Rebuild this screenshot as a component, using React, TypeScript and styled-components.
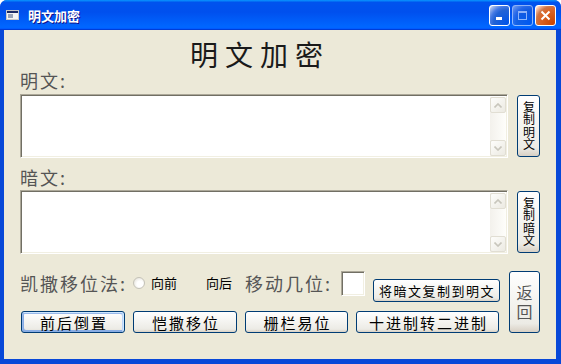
import React from "react";
import styled, { createGlobalStyle, css } from "styled-components";

const CJK = `"Noto Sans CJK SC", "Noto Sans", sans-serif`;

const Global = createGlobalStyle`
  html, body { margin: 0; padding: 0; background: #ffffff; }
  body { font-family: ${CJK}; }
`;

const Window = styled.div`
  width: 561px;
  height: 364px;
  box-sizing: border-box;
  display: flex;
  flex-direction: column;
  background: #0848d8;
  border-radius: 7px 7px 0 0;
  overflow: hidden;
`;

const TitleBar = styled.div`
  height: 30px;
  flex: none;
  display: flex;
  align-items: center;
  padding: 0 5px 0 6px;
  background: linear-gradient(180deg, #0997ff, #0053ee 8%, #0050ee 40%, #06f 88%, #06f 93%, #005bff 95%, #003dd7 96%, #003dd7);
`;

const TitleText = styled.span`
  margin-left: 9px;
  font-family: ${CJK};
  font-weight: bold;
  font-size: 13px;
  color: #ffffff;
  text-shadow: 1px 1px #0f1089;
  flex: 1;
`;

const Controls = styled.div`
  display: flex;
  gap: 2px;
`;

const CtrlButton = styled.div<{ $close?: boolean; $disabled?: boolean }>`
  width: 21px;
  height: 21px;
  box-sizing: border-box;
  border: 1px solid #ffffff;
  border-radius: 3px;
  display: flex;
  align-items: center;
  justify-content: center;
  background: radial-gradient(circle at 90% 90%, #0054e9 0%, #2263d5 55%, #4479e4 70%, #a3bbec 90%, #fff 100%);
  ${(p) =>
    p.$close &&
    css`
      background: radial-gradient(circle at 90% 90%, #cc4600 0%, #dc6527 55%, #cd7546 70%, #ffccb2 90%, #fff 100%);
    `}
  ${(p) =>
    p.$disabled &&
    css`
      opacity: 0.55;
    `}
`;

const Client = styled.div`
  flex: 1;
  margin: 0 5px 5px 4px;
  background: #ece9d8;
  padding: 9px 0 0 16px;
  display: flex;
  flex-direction: column;
`;

const Heading = styled.div`
  margin-left: 170px;
  height: 30px;
  line-height: 30px;
  font-size: 28px;
  letter-spacing: 7px;
  color: #1a1a1a;
  font-family: ${CJK};
`;

const Label = styled.div<{ $mt?: number }>`
  height: 24px;
  line-height: 22px;
  font-size: 18px;
  letter-spacing: 2px;
  color: #555;
  margin-top: ${(p) => p.$mt ?? 0}px;
`;

const FieldRow = styled.div<{ $mt?: number }>`
  display: flex;
  align-items: flex-start;
  margin-top: ${(p) => p.$mt ?? 0}px;
`;

const Field = styled.div`
  width: 488px;
  height: 64px;
  box-sizing: border-box;
  background: #ffffff;
  border: 1px solid;
  border-color: #aca899 #ffffff #ffffff #aca899;
  box-shadow: inset 1px 1px #716f64, inset -1px -1px #f1efe2;
  padding: 2px 1px 1px 2px;
  display: flex;
  justify-content: flex-end;
`;

const ScrollBar = styled.div`
  width: 16px;
  height: 100%;
  display: flex;
  flex-direction: column;
  justify-content: space-between;
  background: linear-gradient(90deg, #f3f1ec, #fefefb);
`;

const ScrollBtn = styled.div`
  width: 16px;
  height: 16px;
  box-sizing: border-box;
  border: 1px solid #e1ded3;
  border-radius: 2px;
  background: linear-gradient(135deg, #fdfdfb, #eceae2);
  display: flex;
  align-items: center;
  justify-content: center;
`;

const XPButton = styled.button<{ $default?: boolean }>`
  box-sizing: border-box;
  margin: 0;
  padding: 0;
  border: 1px solid #003c74;
  border-radius: 3px;
  background: linear-gradient(180deg, #fff, #ecebe5 86%, #d8d0c4);
  font-family: ${CJK};
  color: #000;
  display: flex;
  align-items: center;
  justify-content: center;
  ${(p) =>
    p.$default &&
    css`
      box-shadow: inset -1px 1px #cee7ff, inset 1px 2px #98b8ea, inset -2px 2px #bcd4f6, inset 1px -1px #89ade4, inset 2px -2px #89ade4;
    `}
`;

const SideButton = styled(XPButton)`
  width: 23px;
  height: 62px;
  margin: 1px 0 0 9px;
  font-size: 12px;
  line-height: 12px;
  letter-spacing: 0.5px;
  writing-mode: vertical-rl;
`;

const BottomArea = styled.div`
  display: flex;
  margin-top: 16px;
`;

const LeftCol = styled.div`
  width: 480px;
  display: flex;
  flex-direction: column;
`;

const CaesarRow = styled.div`
  height: 26px;
  display: flex;
  align-items: center;
`;

const RowText = styled.span<{ $w: number; $small?: boolean }>`
  width: ${(p) => p.$w}px;
  flex: none;
  line-height: 26px;
  ${(p) =>
    p.$small
      ? css`
          font-size: 13px;
          color: #000;
        `
      : css`
          font-size: 18px;
          letter-spacing: 2px;
          color: #555;
        `}
`;

const Radio = styled.span`
  width: 12px;
  height: 12px;
  margin-right: 6px;
  box-sizing: border-box;
  border-radius: 50%;
  border: 1px solid #c4c2b8;
  background: radial-gradient(circle at 60% 60%, #ffffff 35%, #e4e2da 85%);
  flex: none;
`;

const SmallInput = styled.div`
  width: 24px;
  height: 25px;
  box-sizing: border-box;
  background: #ffffff;
  border: 1px solid;
  border-color: #aca899 #ffffff #ffffff #aca899;
  box-shadow: inset 1px 1px #716f64, inset -1px -1px #f1efe2;
  flex: none;
`;

const CopyBackButton = styled(XPButton)`
  width: 127px;
  height: 23px;
  margin: 9px 0 0 8px;
  align-self: flex-start;
  font-size: 13px;
  letter-spacing: 1.5px;
  padding-left: 1px;
`;

const ButtonRow = styled.div`
  display: flex;
  margin-top: 15px;
  padding-left: 1px;
  gap: 8px;
`;

const RowButton = styled(XPButton)<{ $w: number }>`
  width: ${(p) => p.$w}px;
  height: 22px;
  font-size: 15px;
  letter-spacing: 2px;
  padding-left: 2px;
`;

const ReturnButton = styled(XPButton)`
  width: 31px;
  height: 62px;
  margin: 1px 0 0 9px;
  font-size: 16px;
  letter-spacing: 3px;
  color: #555;
  writing-mode: vertical-rl;
  padding-top: 3px;
`;

const Arrow = ({ up }: { up?: boolean }) => (
  <svg width="8" height="5" viewBox="0 0 8 5">
    <path
      d={up ? "M0.5 4.5 L4 1 L7.5 4.5" : "M0.5 0.5 L4 4 L7.5 0.5"}
      fill="none"
      stroke="#c8c6bc"
      strokeWidth="1.6"
    />
  </svg>
);

const Scroll = () => (
  <ScrollBar>
    <ScrollBtn>
      <Arrow up />
    </ScrollBtn>
    <ScrollBtn>
      <Arrow />
    </ScrollBtn>
  </ScrollBar>
);

export default function App() {
  return (
    <>
      <Global />
      <Window>
        <TitleBar>
          <svg width="13" height="10" viewBox="0 0 13 10">
            <rect x="0.5" y="0.5" width="12" height="9" fill="#f4f4f4" stroke="#c8c8c8" />
            <rect x="1" y="1" width="11" height="2" fill="#1c2a64" />
            <rect x="2" y="4" width="5" height="4" fill="#9aa4b8" />
          </svg>
          <TitleText>明文加密</TitleText>
          <Controls>
            <CtrlButton>
              <svg width="13" height="13" viewBox="0 0 13 13">
                <rect x="3" y="8" width="6" height="3" fill="#fff" />
              </svg>
            </CtrlButton>
            <CtrlButton $disabled>
              <svg width="13" height="13" viewBox="0 0 13 13">
                <rect x="2.5" y="2.5" width="8" height="8" fill="none" stroke="#fff" />
                <rect x="2" y="2" width="9" height="2" fill="#fff" />
              </svg>
            </CtrlButton>
            <CtrlButton $close>
              <svg width="13" height="13" viewBox="0 0 13 13">
                <path d="M2.5 2.5 L10.5 10.5 M10.5 2.5 L2.5 10.5" stroke="#fff" strokeWidth="2" />
              </svg>
            </CtrlButton>
          </Controls>
        </TitleBar>
        <Client>
          <Heading>明文加密</Heading>
          <Label>明文:</Label>
          <FieldRow $mt={1}>
            <Field>
              <Scroll />
            </Field>
            <SideButton>复制明文</SideButton>
          </FieldRow>
          <Label $mt={8}>暗文:</Label>
          <FieldRow>
            <Field>
              <Scroll />
            </Field>
            <SideButton>复制暗文</SideButton>
          </FieldRow>
          <BottomArea>
            <LeftCol>
              <CaesarRow>
                <RowText $w={113}>凯撒移位法:</RowText>
                <Radio />
                <RowText $w={55} $small>向前</RowText>
                <RowText $w={39} $small>向后</RowText>
                <RowText $w={96}>移动几位:</RowText>
                <SmallInput />
                <CopyBackButton>将暗文复制到明文</CopyBackButton>
              </CaesarRow>
              <ButtonRow>
                <RowButton $w={104} $default>前后倒置</RowButton>
                <RowButton $w={104}>恺撒移位</RowButton>
                <RowButton $w={103}>栅栏易位</RowButton>
                <RowButton $w={143}>十进制转二进制</RowButton>
              </ButtonRow>
            </LeftCol>
            <ReturnButton>返回</ReturnButton>
          </BottomArea>
        </Client>
      </Window>
    </>
  );
}
